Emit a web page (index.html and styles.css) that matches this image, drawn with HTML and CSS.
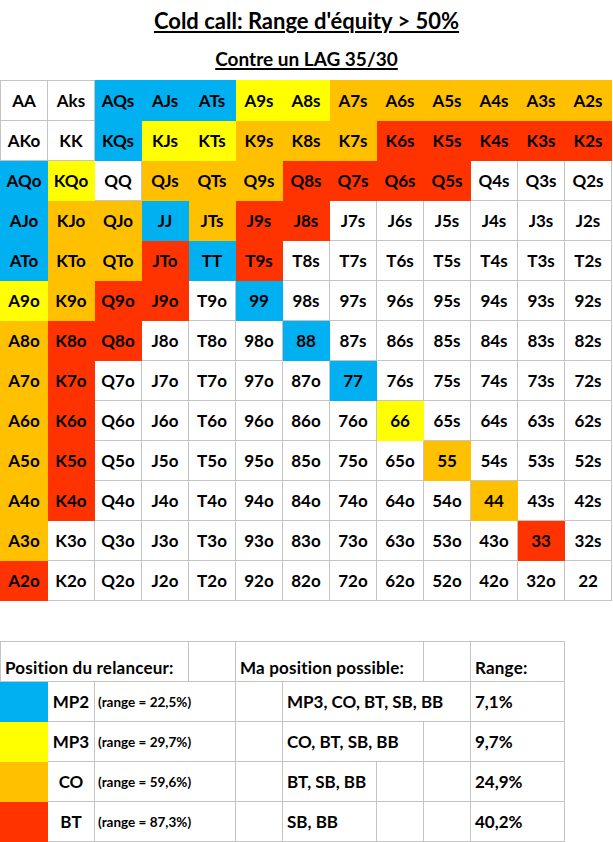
FILE: index.html
```html
<!DOCTYPE html>
<html lang="fr">
<head>
<meta charset="utf-8">
<title>Cold call: Range d'équity &gt; 50%</title>
<link rel="stylesheet" href="styles.css">
</head>
<body>
<h1 class="title">Cold call: Range d'équity &gt; 50%</h1>
<h2 class="subtitle">Contre un LAG 35/30</h2>

<div class="grid">
  <div class="c">AA</div><div class="c">Aks</div><div class="c b">AQs</div><div class="c b">AJs</div><div class="c b">ATs</div><div class="c y">A9s</div><div class="c y">A8s</div><div class="c o">A7s</div><div class="c o">A6s</div><div class="c o">A5s</div><div class="c o">A4s</div><div class="c o">A3s</div><div class="c o">A2s</div>
  <div class="c">AKo</div><div class="c">KK</div><div class="c b">KQs</div><div class="c y">KJs</div><div class="c y">KTs</div><div class="c o">K9s</div><div class="c o">K8s</div><div class="c o">K7s</div><div class="c r">K6s</div><div class="c r">K5s</div><div class="c r">K4s</div><div class="c r">K3s</div><div class="c r">K2s</div>
  <div class="c b">AQo</div><div class="c y">KQo</div><div class="c">QQ</div><div class="c o">QJs</div><div class="c o">QTs</div><div class="c o">Q9s</div><div class="c r">Q8s</div><div class="c r">Q7s</div><div class="c r">Q6s</div><div class="c r">Q5s</div><div class="c">Q4s</div><div class="c">Q3s</div><div class="c">Q2s</div>
  <div class="c b">AJo</div><div class="c o">KJo</div><div class="c o">QJo</div><div class="c b">JJ</div><div class="c o">JTs</div><div class="c r">J9s</div><div class="c r">J8s</div><div class="c">J7s</div><div class="c">J6s</div><div class="c">J5s</div><div class="c">J4s</div><div class="c">J3s</div><div class="c">J2s</div>
  <div class="c b">ATo</div><div class="c o">KTo</div><div class="c o">QTo</div><div class="c r">JTo</div><div class="c b">TT</div><div class="c r">T9s</div><div class="c">T8s</div><div class="c">T7s</div><div class="c">T6s</div><div class="c">T5s</div><div class="c">T4s</div><div class="c">T3s</div><div class="c">T2s</div>
  <div class="c y">A9o</div><div class="c o">K9o</div><div class="c r">Q9o</div><div class="c r">J9o</div><div class="c">T9o</div><div class="c b">99</div><div class="c">98s</div><div class="c">97s</div><div class="c">96s</div><div class="c">95s</div><div class="c">94s</div><div class="c">93s</div><div class="c">92s</div>
  <div class="c o">A8o</div><div class="c r">K8o</div><div class="c r">Q8o</div><div class="c">J8o</div><div class="c">T8o</div><div class="c">98o</div><div class="c b">88</div><div class="c">87s</div><div class="c">86s</div><div class="c">85s</div><div class="c">84s</div><div class="c">83s</div><div class="c">82s</div>
  <div class="c o">A7o</div><div class="c r">K7o</div><div class="c">Q7o</div><div class="c">J7o</div><div class="c">T7o</div><div class="c">97o</div><div class="c">87o</div><div class="c b">77</div><div class="c">76s</div><div class="c">75s</div><div class="c">74s</div><div class="c">73s</div><div class="c">72s</div>
  <div class="c o">A6o</div><div class="c r">K6o</div><div class="c">Q6o</div><div class="c">J6o</div><div class="c">T6o</div><div class="c">96o</div><div class="c">86o</div><div class="c">76o</div><div class="c y">66</div><div class="c">65s</div><div class="c">64s</div><div class="c">63s</div><div class="c">62s</div>
  <div class="c o">A5o</div><div class="c r">K5o</div><div class="c">Q5o</div><div class="c">J5o</div><div class="c">T5o</div><div class="c">95o</div><div class="c">85o</div><div class="c">75o</div><div class="c">65o</div><div class="c o">55</div><div class="c">54s</div><div class="c">53s</div><div class="c">52s</div>
  <div class="c o">A4o</div><div class="c r">K4o</div><div class="c">Q4o</div><div class="c">J4o</div><div class="c">T4o</div><div class="c">94o</div><div class="c">84o</div><div class="c">74o</div><div class="c">64o</div><div class="c">54o</div><div class="c o">44</div><div class="c">43s</div><div class="c">42s</div>
  <div class="c o">A3o</div><div class="c">K3o</div><div class="c">Q3o</div><div class="c">J3o</div><div class="c">T3o</div><div class="c">93o</div><div class="c">83o</div><div class="c">73o</div><div class="c">63o</div><div class="c">53o</div><div class="c">43o</div><div class="c r">33</div><div class="c">32s</div>
  <div class="c r">A2o</div><div class="c">K2o</div><div class="c">Q2o</div><div class="c">J2o</div><div class="c">T2o</div><div class="c">92o</div><div class="c">82o</div><div class="c">72o</div><div class="c">62o</div><div class="c">52o</div><div class="c">42o</div><div class="c">32o</div><div class="c">22</div>
</div>

<div class="legend">
  <div class="l hd s4 first top">Position du relanceur:</div>
  <div class="l s1 top"></div>
  <div class="l hd s4 top">Ma position possible:</div>
  <div class="l s1 top"></div>
  <div class="l hd s2 top">Range:</div>

  <div class="l sw b first"></div>
  <div class="l lab">MP2</div>
  <div class="l note s3">(range = 22,5%)</div>
  <div class="l s1"></div>
  <div class="l txt s4">MP3, CO, BT, SB, BB</div>
  <div class="l txt s2">7,1%</div>

  <div class="l sw y first"></div>
  <div class="l lab">MP3</div>
  <div class="l note s3">(range = 29,7%)</div>
  <div class="l s1"></div>
  <div class="l txt s3">CO, BT, SB, BB</div>
  <div class="l s1"></div>
  <div class="l txt s2">9,7%</div>

  <div class="l sw o first"></div>
  <div class="l lab">CO</div>
  <div class="l note s3">(range = 59,6%)</div>
  <div class="l s1"></div>
  <div class="l txt s2">BT, SB, BB</div>
  <div class="l s1"></div>
  <div class="l s1"></div>
  <div class="l txt s2">24,9%</div>

  <div class="l sw r first"></div>
  <div class="l lab">BT</div>
  <div class="l note s3">(range = 87,3%)</div>
  <div class="l s1"></div>
  <div class="l txt s2">SB, BB</div>
  <div class="l s1"></div>
  <div class="l s1"></div>
  <div class="l txt s2">40,2%</div>
</div>
</body>
</html>
```
FILE: styles.css
```css
html, body {
  margin: 0;
  padding: 0;
  background: #ffffff;
}

body {
  width: 613px;
  font-family: Lato, "Liberation Sans", sans-serif;
  font-weight: 700;
  color: #000000;
}

.title {
  margin: 0;
  height: 42px;
  font-size: 22px;
  line-height: 42px;
  font-weight: 700;
  text-align: center;
  text-decoration: underline;
  text-decoration-thickness: 2px;
  text-underline-offset: 2px;
}

.subtitle {
  margin: 0 0 4px;
  height: 34px;
  font-size: 19px;
  line-height: 34px;
  font-weight: 700;
  text-align: center;
  text-decoration: underline;
  text-decoration-thickness: 2px;
  text-underline-offset: 2px;
}

/* ---------- range grid ---------- */
.grid {
  display: grid;
  grid-template-columns: 48px repeat(12, 47px);
  grid-template-rows: 41px repeat(12, 40px);
}

.c {
  box-sizing: border-box;
  display: flex;
  align-items: center;
  justify-content: center;
  font-size: 17px;
  border-right: 1px solid #c4c4c4;
  border-bottom: 1px solid #c4c4c4;
  background: #ffffff;
}

.grid > .c:nth-child(13n+1) {
  border-left: 1px solid #c4c4c4;
}

.grid > .c:nth-child(-n+13) {
  border-top: 1px solid #c4c4c4;
}

.b { background: #00b0f0 !important; border-color: #00b0f0 !important; }
.y { background: #ffff00 !important; border-color: #ffff00 !important; }
.o { background: #ffc000 !important; border-color: #ffc000 !important; }
.r { background: #ff3300 !important; border-color: #ff3300 !important; }

/* ---------- legend table ---------- */
.legend {
  margin-top: 40px;
  display: grid;
  grid-template-columns: 48px repeat(11, 47px);
  grid-template-rows: 41px repeat(4, 40px);
}

.l {
  box-sizing: border-box;
  display: flex;
  align-items: center;
  padding-left: 4px;
  border-right: 1px solid #c4c4c4;
  border-bottom: 1px solid #c4c4c4;
  background: #ffffff;
  font-size: 17px;
  letter-spacing: 0;
  white-space: nowrap;
}

.l.first { border-left: 1px solid #c4c4c4; }
.l.top { border-top: 1px solid #c4c4c4; }

.s1 { grid-column: span 1; }
.s2 { grid-column: span 2; }
.s3 { grid-column: span 3; }
.s4 { grid-column: span 4; }

.hd {
  align-items: flex-end;
  padding-bottom: 3px;
  letter-spacing: 0.2px;
}

.lab {
  justify-content: center;
  padding-left: 0;
  font-size: 17px;
}

.note {
  padding-left: 3px;
  font-size: 13.5px;
}

.txt {
  padding-left: 4px;
}
```
